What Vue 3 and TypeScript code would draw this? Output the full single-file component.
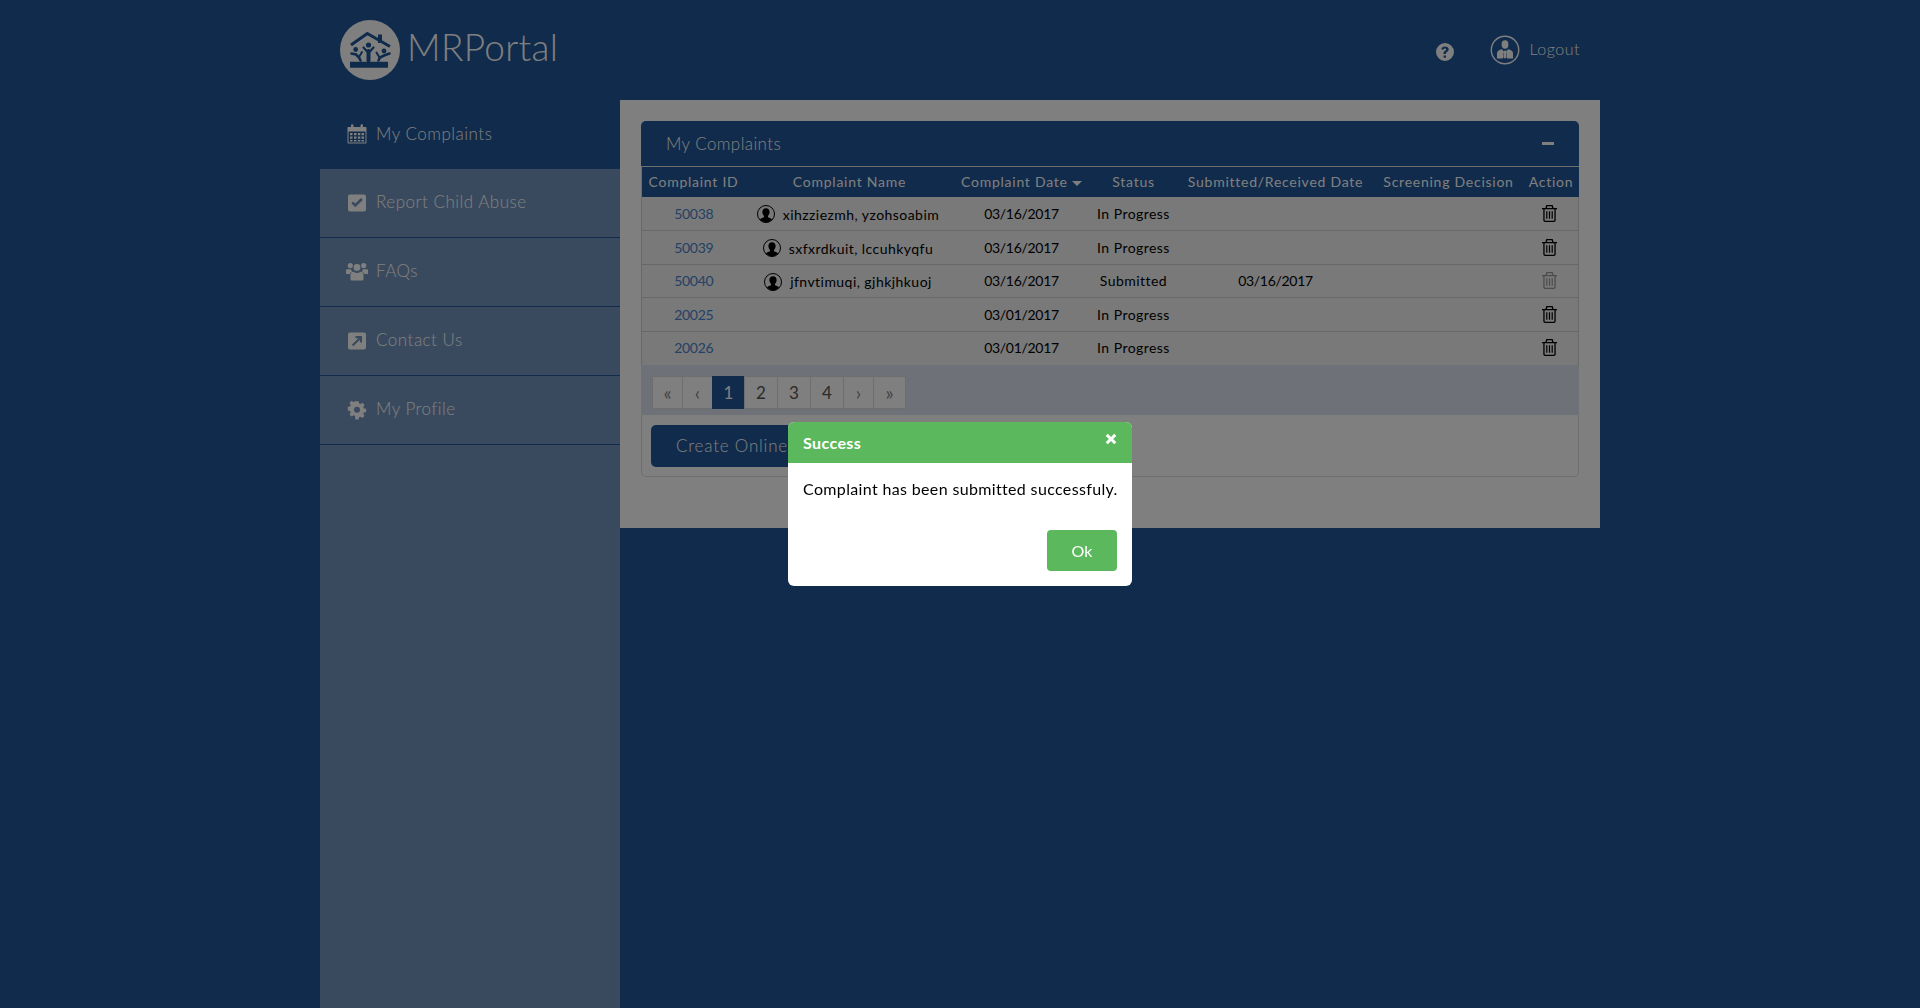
<script setup lang="ts">
interface Row {
  id: string
  name: string
  date: string
  status: string
  received: string
  locked: boolean
}

const rows: Row[] = [
  { id: '50038', name: 'xihzziezmh, yzohsoabim', date: '03/16/2017', status: 'In Progress', received: '', locked: false },
  { id: '50039', name: 'sxfxrdkuit, lccuhkyqfu', date: '03/16/2017', status: 'In Progress', received: '', locked: false },
  { id: '50040', name: 'jfnvtimuqi, gjhkjhkuoj', date: '03/16/2017', status: 'Submitted', received: '03/16/2017', locked: true },
  { id: '20025', name: '', date: '03/01/2017', status: 'In Progress', received: '', locked: false },
  { id: '20026', name: '', date: '03/01/2017', status: 'In Progress', received: '', locked: false },
]

const pages = ['«', '‹', '1', '2', '3', '4', '›', '»']
</script>

<template>
  <div class="page">
    <header class="top">
      <div class="brand">
        <svg class="logo" viewBox="0 0 60 60" aria-hidden="true">
          <circle cx="30" cy="30" r="30" fill="#fff" />
          <path d="M38 14.500h4V23h-4z" fill="#1e5698" />
          <path d="M11 25 27.300 13.500 50 26.500" fill="none" stroke="#1e5698" stroke-width="3" />
          <path d="M10 41.700h38v6H10z" fill="#1e5698" />
          <g fill="#1e5698">
            <circle cx="28.500" cy="25" r="2.600" />
            <circle cx="15.700" cy="29.500" r="2.400" />
            <circle cx="44" cy="31" r="2.400" />
          </g>
          <g fill="none" stroke="#1e5698" stroke-linecap="round">
            <path d="M23.500 27.500 27 31.500h3L33.500 27.500" stroke-width="2.200" />
            <path d="M28.500 31v9.500" stroke-width="4" />
            <path d="M11.500 33.500 16 34.500 19 37.500 20.500 40.500" stroke-width="2.600" />
            <path d="M22 32 19 37" stroke-width="2" />
            <path d="M49.500 33.500 44 35.500 40 37.500 38.500 40.500" stroke-width="2.600" />
            <path d="M36.500 32.500 39.500 37.500" stroke-width="2" />
          </g>
        </svg>
        <span class="brand-name">MRPortal</span>
      </div>
      <div class="top-actions">
        <svg class="help" viewBox="0 0 18 18" aria-hidden="true">
          <path fill-rule="evenodd" d="M9 0a9 9 0 1 1 0 18A9 9 0 0 1 9 0zM7.600 12.600v2.200h2.400v-2.200zM9 3.400c-2 0-3.300 1-3.700 2.700l2 .8c.3-1 .8-1.500 1.600-1.500.7 0 1.200.4 1.200 1 0 .5-.3.8-1 1.300-1 .7-1.600 1.300-1.600 2.400v.9h2.400v-.6c0-.5.3-.8 1-1.300 1-.7 1.800-1.400 1.800-2.800 0-1.800-1.600-2.900-3.700-2.900z" fill="#fff" />
        </svg>
        <a class="logout">
          <svg class="logout-ic" viewBox="0 0 30 30" aria-hidden="true">
            <circle cx="15" cy="15" r="13.700" fill="none" stroke="#fff" stroke-width="1.400" />
            <ellipse cx="15" cy="9.500" rx="3.400" ry="4.200" fill="#fff" />
            <path d="M7 23.500V18c0-2 2-3.100 5-3.800l1.800 2.400-.8 6.900zM23 23.500V18c0-2-2-3.100-5-3.800l-1.800 2.400.8 6.900zM14.400 15.500h1.200l.8 1.600-.5 1.200.6 4-1.500 1.500-1.500-1.500.6-4-.5-1.200z" fill="#fff" />
          </svg>
          <span class="logout-txt">Logout</span>
        </a>
      </div>
    </header>

    <div class="body">
      <nav class="side">
        <a class="side-item current">
          <svg class="side-ic" viewBox="0 0 20 20" aria-hidden="true">
            <path fill-rule="evenodd" d="M1.500 3H4V1.500C4 .7 4.600.3 5.200.3s1.300.4 1.300 1.200V3h7V1.500c0-.8.6-1.200 1.300-1.200S16 .7 16 1.500V3h2.500c.6 0 1 .4 1 1v14.500c0 .6-.4 1-1 1h-17c-.6 0-1-.4-1-1V4c0-.6.4-1 1-1zm0 4.500v11h17v-11zM3 9h2.500v2.300H3zm4 0h2.500v2.300H7zm3.800 0h2.500v2.300h-2.500zm3.700 0H17v2.300h-2.500zM3 12.500h2.500v2.300H3zm4 0h2.500v2.300H7zm3.800 0h2.500v2.300h-2.500zm3.700 0H17v2.300h-2.500zM3 16h2.500v1.500H3zm4 0h2.500v1.500H7zm3.800 0h2.500v1.500h-2.500zm3.700 0H17v1.500h-2.500z" fill="#fff" />
          </svg>
          <span>My Complaints</span>
        </a>
        <a class="side-item">
          <svg class="side-ic" viewBox="0 0 20 20" aria-hidden="true">
            <path fill-rule="evenodd" d="M3 1.500h14c1.200 0 2 .8 2 2v13c0 1.200-.8 2-2 2H3c-1.200 0-2-.8-2-2v-13c0-1.200.8-2 2-2zM4.300 10.200l4 4 7.500-7.300-1.800-1.800-5.700 5.500-2.200-2.200z" fill="#fff" />
          </svg>
          <span>Report Child Abuse</span>
        </a>
        <a class="side-item">
          <svg class="side-ic wide" viewBox="0 0 22 20" aria-hidden="true">
            <path d="M4.300 1a2.600 2.600 0 1 0 0 5.200 2.600 2.600 0 0 0 0-5.200zM17.700 1a2.600 2.600 0 1 0 0 5.200 2.600 2.600 0 0 0 0-5.200zM11 2a3.400 3.400 0 1 0 0 6.800A3.400 3.400 0 0 0 11 2zM0 12V8.400c0-.7.500-1.200 1.200-1.200h3.900c.1 1 .5 1.900 1.200 2.500-1.300.4-2.200 1.200-2.600 2.300zM22 12V8.400c0-.7-.5-1.200-1.200-1.200h-3.900c-.1 1-.5 1.900-1.200 2.500 1.300.4 2.200 1.200 2.600 2.300zM7.500 9.800c.9.8 2.100 1.200 3.500 1.200s2.600-.4 3.500-1.200c1.800 0 3 1.200 3 3v4.200c0 1-.7 1.600-1.700 1.600H6.200c-1 0-1.700-.6-1.700-1.600v-4.200c0-1.800 1.200-3 3-3z" fill="#fff" />
          </svg>
          <span>FAQs</span>
        </a>
        <a class="side-item">
          <svg class="side-ic" viewBox="0 0 20 20" aria-hidden="true">
            <path fill-rule="evenodd" d="M3 1.500h14c1.200 0 2 .8 2 2v13c0 1.200-.8 2-2 2H3c-1.200 0-2-.8-2-2v-13c0-1.200.8-2 2-2zM8.500 5v2.200h2.900L4.800 13.800l1.500 1.500 6.600-6.600v2.900H15V5z" fill="#fff" />
          </svg>
          <span>Contact Us</span>
        </a>
        <a class="side-item">
          <svg class="side-ic" viewBox="0 0 20 20" aria-hidden="true">
            <path fill-rule="evenodd" d="M8.400 1.500h3.200l.4 2.300 1.500.6 1.900-1.300 2.200 2.200-1.300 1.900.6 1.500 2.300.4v3.200l-2.300.4-.6 1.500 1.300 1.900-2.200 2.200-1.900-1.300-1.500.6-.4 2.300H8.400L8 16.100l-1.500-.6-1.900 1.300-2.200-2.200 1.300-1.900-.6-1.500-2.300-.4V7.100l2.300-.4.6-1.500-1.300-1.900 2.200-2.200 1.900 1.300L8 1.800zM10 7a3 3 0 1 0 0 6 3 3 0 0 0 0-6z" fill="#fff" transform="translate(0 -.3)" />
          </svg>
          <span>My Profile</span>
        </a>
      </nav>

      <main class="content">
        <section class="panel">
          <div class="panel-head">
            <span>My Complaints</span>
            <span class="collapse"></span>
          </div>
          <table class="grid">
            <colgroup>
              <col style="width: 104px" />
              <col style="width: 208px" />
              <col style="width: 136px" />
              <col style="width: 88px" />
              <col style="width: 196px" />
              <col style="width: 150px" />
              <col />
            </colgroup>
            <thead>
              <tr>
                <th>Complaint ID</th>
                <th>Complaint Name</th>
                <th>Complaint Date <i class="caret"></i></th>
                <th>Status</th>
                <th>Submitted/Received Date</th>
                <th>Screening Decision</th>
                <th>Action</th>
              </tr>
            </thead>
            <tbody>
              <tr v-for="r in rows" :key="r.id">
                <td><a class="cid">{{ r.id }}</a></td>
                <td>
                  <span v-if="r.name" class="person">
                    <svg class="avatar" viewBox="0 0 18 18" aria-hidden="true">
                      <circle cx="9" cy="9" r="8.500" fill="none" stroke="#000" />
                      <path d="M9 3.200c2.300 0 3.600 1.700 3.600 3.900 0 1.600-.7 3-1.600 3.800v1.300c2 .5 3.300 1.200 4 2.300A8 8 0 0 1 9 17.500 8 8 0 0 1 3 14.500c.7-1.100 2-1.800 4-2.300v-1.300c-.9-.8-1.600-2.200-1.600-3.800 0-2.200 1.300-3.900 3.600-3.900z" fill="#000" />
                    </svg>
                    {{ r.name }}
                  </span>
                </td>
                <td class="num">{{ r.date }}</td>
                <td>{{ r.status }}</td>
                <td class="num">{{ r.received }}</td>
                <td></td>
                <td class="act">
                  <svg class="trash" :class="{ locked: r.locked }" viewBox="0 0 15 17" aria-hidden="true">
                    <path fill-rule="evenodd" d="M5 0h5c.6 0 1 .4 1 1l.6 2H15v1.200h-1.300V15c0 1.200-.8 2-1.800 2H3.100c-1 0-1.800-.8-1.800-2V4.200H0V3h3.400L4 1c0-.6.4-1 1-1zm.3 1.200L4.900 3h5.200l-.4-1.800zM2.600 4.200V15c0 .5.3.8.6.8h8.600c.3 0 .6-.3.6-.8V4.200zM4.200 6.200h1.200v7.600H4.200zm2.700 0h1.200v7.600H6.900zm2.700 0h1.200v7.600H9.600z" fill="currentColor" />
                  </svg>
                </td>
              </tr>
            </tbody>
          </table>
          <div class="pager-bar">
            <ul class="pager">
              <li v-for="(p, i) in pages" :key="i" :class="{ on: p === '1', muted: i < 2 || i > 5 }">{{ p }}</li>
            </ul>
          </div>
          <div class="panel-foot">
            <button class="create" type="button">Create Online Complaint</button>
          </div>
        </section>
      </main>
    </div>

    <div class="overlay">
      <div class="dialog" role="dialog">
        <div class="dialog-head">
          <span>Success</span>
          <svg class="close" viewBox="0 0 12 12" aria-hidden="true">
            <path d="M2.800.8 6 4 9.200.8 11.300 2.900 8.100 6l3.200 3.200-2.100 2.100L6 8.100 2.800 11.300.7 9.200 3.900 6 .7 2.900z" fill="#fff" />
          </svg>
        </div>
        <p class="dialog-msg">Complaint has been submitted successfuly.</p>
        <div class="dialog-foot">
          <button class="ok" type="button">Ok</button>
        </div>
      </div>
    </div>
  </div>
</template>

<style>
html,
body {
  margin: 0;
  background: #205696;
}
</style>

<style scoped>
.page {
  width: 1280px;
  min-height: 1008px;
  margin: 0 auto;
  display: flex;
  flex-direction: column;
  font-family: Lato, 'Liberation Sans', sans-serif;
  color: #000;
}

/* 상단 */
.top {
  height: 100px;
  box-sizing: border-box;
  padding: 20px 20px 0 20px;
  display: flex;
  justify-content: space-between;
  align-items: flex-start;
}
.brand {
  display: flex;
  align-items: center;
  gap: 7px;
}
.logo {
  width: 60px;
  height: 60px;
}
.brand-name {
  color: #fff;
  font-size: 37px;
  font-weight: 300;
  letter-spacing: 0.3px;
  margin-top: -7px;
}
.top-actions {
  display: flex;
  align-items: center;
  gap: 36px;
  padding-top: 15px;
}
.help {
  width: 18px;
  height: 18px;
  margin-top: 4px;
}
.logout {
  display: flex;
  align-items: center;
  gap: 10px;
  color: #fff;
  font-size: 16px;
  font-weight: 300;
  letter-spacing: 0.5px;
}
.logout-ic {
  width: 30px;
  height: 30px;
}
.logout-txt {
  margin-top: -3px;
}

/* 사이드 메뉴 */
.body {
  display: flex;
  flex: 1;
}
.side {
  width: 300px;
  background: #7494bc;
  flex: none;
}
.side-item {
  height: 69px;
  box-sizing: border-box;
  padding: 0 0 3px 27px;
  display: flex;
  align-items: center;
  gap: 9px;
  color: #fff;
  font-size: 17px;
  font-weight: 300;
  letter-spacing: 0.5px;
  border-bottom: 1px solid #205696;
}
.side-item.current {
  background: #205696;
  border-bottom: 0;
}
.side-ic {
  width: 20px;
  height: 20px;
  flex: none;
  margin-top: 2px;
}
.side-ic.wide {
  width: 22px;
  margin: 2px -1px 0;
}

/* 본문 */
.content {
  width: 980px;
  height: 428px;
  box-sizing: border-box;
  padding: 21px 21px 0;
  background: #fff;
}
.panel {
  height: 356px;
  box-sizing: border-box;
  border: 1px solid #ddd;
  border-top: 0;
  border-radius: 5px;
  display: flex;
  flex-direction: column;
}
.panel-head {
  height: 46px;
  box-sizing: border-box;
  padding: 0 25px 0 25px;
  margin: 0 -1px;
  display: flex;
  justify-content: space-between;
  align-items: center;
  background: #205696;
  color: #fff;
  font-size: 17px;
  font-weight: 300;
  letter-spacing: 0.4px;
  border-bottom: 1px solid #ddd;
  border-radius: 5px 5px 0 0;
}
.collapse {
  width: 12px;
  height: 3px;
  background: #fff;
}
.grid {
  width: calc(100% + 2px);
  margin: 0 -1px;
  table-layout: fixed;
  border-collapse: collapse;
  font-size: 14px;
}
.grid th {
  height: 30px;
  box-sizing: border-box;
  padding: 0 0 1px;
  background: #205696;
  color: #fff;
  font-weight: 400;
  text-align: center;
  white-space: nowrap;
  letter-spacing: 0.75px;
}
.caret {
  display: inline-block;
  border-left: 5px solid transparent;
  border-right: 5px solid transparent;
  border-top: 5px solid #fff;
  vertical-align: middle;
}
.grid td {
  height: 33.500px;
  padding: 0;
  text-align: center;
  white-space: nowrap;
  letter-spacing: 0.45px;
  background: #f2f2f2;
  border-bottom: 1px solid #d0d0d0;
  box-sizing: border-box;
}
.grid td:first-child {
  border-left: 1px solid #d0d0d0;
}
.grid td:last-child {
  border-right: 1px solid #d0d0d0;
}
.grid tbody tr:last-child td {
  border-bottom: 0;
  padding-bottom: 2px;
}
.grid td.num {
  letter-spacing: -0.3px;
}
.grid td.act {
  padding-right: 3px;
}
.cid {
  color: #4584cc;
  letter-spacing: -0.3px;
}
.person {
  display: inline-flex;
  align-items: center;
  gap: 8px;
  vertical-align: middle;
  padding-top: 1px;
}
.avatar {
  width: 18px;
  height: 18px;
  margin-left: -3px;
}
.trash {
  width: 15px;
  height: 17px;
  display: block;
  margin: 0 auto;
  color: #000;
}
.trash.locked {
  color: #999;
}
.pager-bar {
  height: 50px;
  box-sizing: border-box;
  padding: 11px 10px 0;
  margin: 0 -1px;
  background: #dce4f0;
}
.pager {
  display: flex;
  margin: 0;
  padding: 0 0 0 2px;
  list-style: none;
  font-size: 17px;
}
.pager li {
  height: 33px;
  box-sizing: border-box;
  padding: 0;
  width: 34px;
  display: flex;
  align-items: center;
  justify-content: center;
  background: #fff;
  border: 1px solid #ddd;
  margin-left: -1px;
  color: #555;
}
.pager li.muted {
  color: #888;
  font-size: 19px;
  width: 31px;
}
.pager li.muted:last-child {
  width: 33px;
}
.pager li.on {
  width: 33px;
  background: #205696;
  border-color: #205696;
  color: #fff;
}
.panel-foot {
  padding: 10px 10px 0 9px;
}
.create {
  height: 42px;
  width: 320px;
  border: 0;
  border-radius: 5px;
  background: #205696;
  color: #fff;
  font: 300 17px Lato, sans-serif;
  letter-spacing: 0.8px;
  text-align: left;
  padding: 0 25px;
}

/* 모달 */
.overlay {
  position: fixed;
  inset: 0;
  background: rgba(0, 0, 0, 0.5);
}
.dialog {
  position: absolute;
  top: 422px;
  left: 788px;
  width: 344px;
  height: 164px;
  background: #fff;
  border-radius: 6px;
  overflow: hidden;
  display: flex;
  flex-direction: column;
}
.dialog-head {
  height: 41px;
  flex: none;
  box-sizing: border-box;
  padding: 0 15px;
  display: flex;
  justify-content: space-between;
  align-items: center;
  background: #5cb85c;
  color: #fff;
  font-size: 16px;
  font-weight: 700;
  letter-spacing: 0.4px;
}
.close {
  width: 12px;
  height: 12px;
  margin-top: -8px;
}
.dialog-msg {
  margin: 16px 15px 0;
  font-size: 16px;
  letter-spacing: 0.35px;
  white-space: nowrap;
  flex: 1;
}
.dialog-foot {
  padding: 0 15px 15px;
  display: flex;
  justify-content: flex-end;
}
.ok {
  width: 70px;
  height: 41px;
  border: 0;
  border-radius: 4px;
  background: #5cb85c;
  color: #fff;
  font: 400 16px Lato, sans-serif;
}
</style>
